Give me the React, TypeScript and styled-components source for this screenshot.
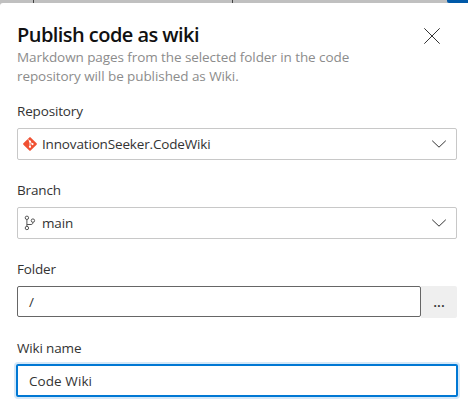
import * as React from 'react'
import styled, { createGlobalStyle } from 'styled-components'

const GlobalStyle = createGlobalStyle`
  body {
    margin: 0;
    overflow: hidden;
    background: #c0c0c0;
    font-family: 'Open Sans', 'Noto Sans', sans-serif;
    font-size: 13.5px;
    color: #333;
  }

  * {
    box-sizing: border-box;
  }
`

const Backdrop = styled.div`
  display: flex;
  height: 3px;
  background: #c0c0c0;
`

const Column = styled.div<{ width: number }>`
  flex: none;
  width: ${p => p.width}px;
  border-right: 1px solid #444;
`

const Primary = styled.div`
  width: 21px;
  margin-left: auto;
  background: #0059a8;
  border-bottom-left-radius: 2px;
`

const Panel = styled.div`
  height: 408px;
  padding: 19px 11px 0 17px;
  background: #fff;
  border-top-left-radius: 3px;
`

const Header = styled.div`
  display: flex;
  justify-content: space-between;
  height: 79px;
`

const Title = styled.h1`
  margin: 0;
  font-size: 20px;
  font-weight: 600;
  line-height: 26px;
  letter-spacing: -0.55px;
  color: #111;
  white-space: nowrap;
`

const Description = styled.div`
  line-height: 19px;
  letter-spacing: -0.08px;
  color: #8c8c8c;
  white-space: nowrap;
`

const Close = styled.button`
  width: 16px;
  height: 16px;
  margin: 6px 17px 0 0;
  padding: 0;
  border: 0;
  background: none;

  svg {
    display: block;
  }
`

const Field = styled.div`
  height: 79px;
`

const Label = styled.label`
  display: block;
  height: 27px;
  line-height: 20px;
  letter-spacing: -0.16px;
`

const Select = styled.div`
  display: flex;
  align-items: center;
  width: 440px;
  height: 32px;
  padding: 0 10px 0 5px;
  border: 1px solid #c8c8c8;
  border-radius: 2px;

  svg {
    flex: none;
  }
`

const Value = styled.span`
  flex: 1;
  margin-left: 4px;
  line-height: 20px;
  letter-spacing: -0.16px;
`

const Row = styled.div`
  display: flex;
  width: 440px;
`

const FolderInput = styled.div`
  width: 404px;
  height: 31px;
  padding: 0 11px;
  border: 1px solid #666;
  border-radius: 2px;
  line-height: 31px;
`

const Browse = styled.button`
  width: 36px;
  height: 32px;
  padding: 0;
  border: 0;
  border-radius: 0 2px 2px 0;
  background: #efefef;
  font: 600 14px/32px 'Open Sans', sans-serif;
  color: #333;
`

const NameInput = styled.div`
  width: 442px;
  height: 33px;
  margin: -1px 0 0 -1px;
  padding: 0 11px;
  border: 2px solid #0078d4;
  border-radius: 2px;
  box-shadow: 0 0 0 2px #d5e8f8;
  line-height: 31px;
  letter-spacing: 0.08px;
`

const GitIcon = () => (
  <svg width="15" height="16" viewBox="0 0 15 16">
    <rect x="1.9" y="2.9" width="10.2" height="10.2" rx="0.9" fill="#f05133" transform="rotate(45 7 8)" />
    <path d="M5 3.3L7 5.3V11M7 5.7L9.4 8" fill="none" stroke="#fff" strokeWidth="0.9" />
    <circle cx="7" cy="5.5" r="1.1" fill="#fff" />
    <circle cx="7" cy="10.8" r="1.1" fill="#fff" />
    <circle cx="9.5" cy="8.1" r="1.1" fill="#fff" />
  </svg>
)

const BranchIcon = () => (
  <svg width="15" height="16" viewBox="0 0 15 16" fill="none" stroke="#555" strokeWidth="1">
    <circle cx="3.9" cy="2.8" r="1.7" />
    <circle cx="3.9" cy="13" r="1.7" />
    <circle cx="9.9" cy="5.6" r="1.7" />
    <path d="M3.9 4.5V11.3M3.9 9.5H8C9.4 9.5 9.9 8.7 9.9 7.3" />
  </svg>
)

const Chevron = () => (
  <svg width="15" height="8" viewBox="0 0 15 8">
    <path d="M1.2 0.7L8 7.2L14.8 0.7" fill="none" stroke="#333" strokeWidth="1" />
  </svg>
)

export default function App() {
  return (
    <>
      <GlobalStyle />
      <Backdrop>
        <Column width={34} />
        <Column width={199} />
        <Primary />
      </Backdrop>
      <Panel>
        <Header>
          <div>
            <Title>Publish code as wiki</Title>
            <Description>Markdown pages from the selected folder in the code</Description>
            <Description>repository will be published as Wiki.</Description>
          </div>
          <Close aria-label="Close">
            <svg width="16" height="16" viewBox="0 0 16 16">
              <path d="M0.3 0.3L15.7 15.7M15.7 0.3L0.3 15.7" stroke="#333" strokeWidth="1" />
            </svg>
          </Close>
        </Header>
        <Field>
          <Label>Repository</Label>
          <Select>
            <GitIcon />
            <Value>InnovationSeeker.CodeWiki</Value>
            <Chevron />
          </Select>
        </Field>
        <Field>
          <Label>Branch</Label>
          <Select>
            <BranchIcon />
            <Value>main</Value>
            <Chevron />
          </Select>
        </Field>
        <Field>
          <Label>Folder</Label>
          <Row>
            <FolderInput>/</FolderInput>
            <Browse>...</Browse>
          </Row>
        </Field>
        <Field>
          <Label>Wiki name</Label>
          <NameInput>Code Wiki</NameInput>
        </Field>
      </Panel>
    </>
  )
}
